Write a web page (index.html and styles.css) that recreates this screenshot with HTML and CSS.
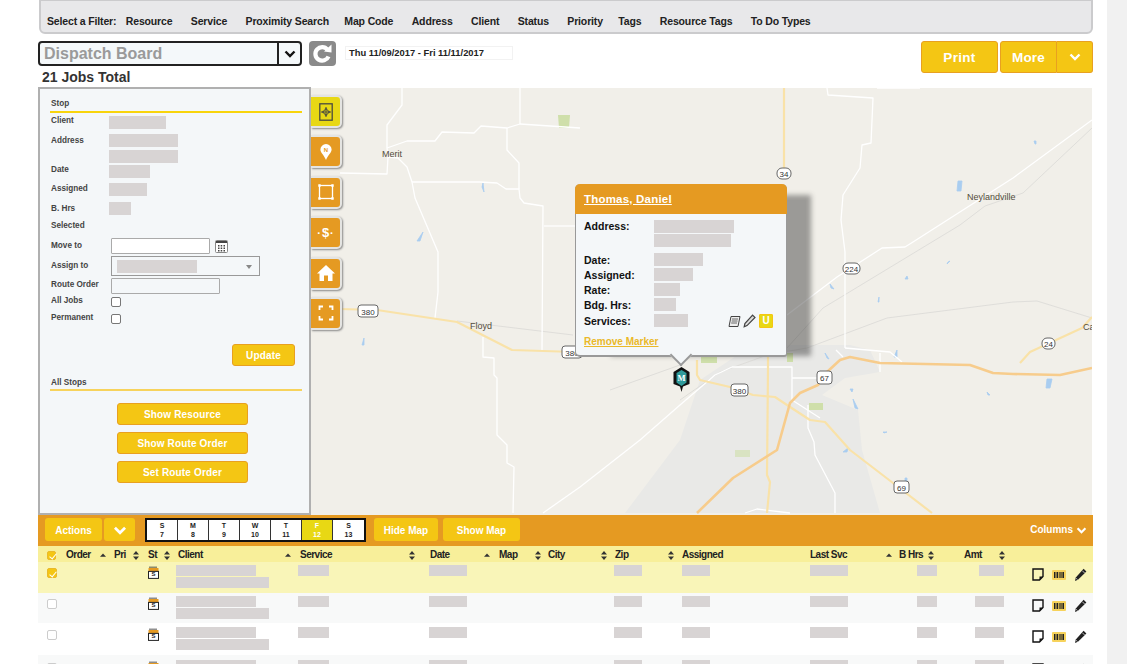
FILE: index.html
```html
<!DOCTYPE html>
<html lang="en">
<head>
<meta charset="utf-8">
<title>Dispatch Board</title>
<link rel="stylesheet" href="styles.css">
</head>
<body>
<svg class="defs" width="0" height="0" aria-hidden="true">
  <symbol id="sortb" viewBox="0 0 6 9"><path d="M3 0 6 3.4H0Z M3 9 0 5.6H6Z" fill="#333"/></symbol>
  <symbol id="sortu" viewBox="0 0 6 9"><path d="M3 2.5 6 5.8H0Z" fill="#333"/></symbol>
  <symbol id="note" viewBox="0 0 12 13"><path d="M1 1H11V8.5L7.5 12H1Z" fill="none" stroke="#111" stroke-width="1.4"/><path d="M11 8.5 7.5 12V8.5Z" fill="#111"/></symbol>
  <symbol id="barcode" viewBox="0 0 14 10"><rect width="14" height="10" rx="1" fill="#f7d35c"/><path d="M2 2H3.5V8H2ZM4.5 2H6V8H4.5ZM6.8 2H7.6V8H6.8ZM8.4 2H9.6V8H8.4ZM10.4 2H12V8H10.4Z" fill="#222"/></symbol>
  <symbol id="pencil" viewBox="0 0 13 14"><path d="M9.6.8 12.4 3.4 4 11.8 1 13 1.8 9.4Z" fill="#222"/><path d="M8.4 2.8 10.6 5" stroke="#fff" stroke-width=".7"/><path d="M1.8 10 3.6 11.6" stroke="#fff" stroke-width=".6"/></symbol>
  <symbol id="cal" viewBox="0 0 11 13"><path d="M2 .5V2M4 .5V2M6 .5V2M8 .5V2" stroke="#222" stroke-width="1"/><rect x=".5" y="2" width="10" height="3.4" fill="#e59a22"/><rect x=".5" y="5.4" width="10" height="7" fill="#fff" stroke="#222"/></symbol>
  <symbol id="chev" viewBox="0 0 12 8"><path d="M1.5 1.5 6 6 10.5 1.5" fill="none" stroke="currentColor" stroke-width="2.4"/></symbol>
</svg>
<div class="page">
  <main class="main">
    <nav class="filter">
      <span class="filter-title">Select a Filter:</span>
      <span>Resource</span><span>Service</span><span class="tight-s">Proximity Search</span><span>Map Code</span><span>Address</span><span>Client</span><span>Status</span><span class="tight-m">Priority</span><span>Tags</span><span>Resource Tags</span><span>To Do Types</span>
    </nav>

    <header class="head">
      <div class="head-left">
        <div class="head-controls">
          <div class="board-select">
            <span class="board-name">Dispatch Board</span>
            <span class="board-arrow"><svg class="chev-s"><use href="#chev"/></svg></span>
          </div>
          <button class="refresh" aria-label="Refresh">
            <svg viewBox="0 0 27 25" width="27" height="25"><path d="M18.5 8.6A6.800 6.800 0 1 0 19.500 15.500" fill="none" stroke="#fff" stroke-width="4.200"/><path d="M15 10.500 22.500 3.500V11.500Z" fill="#fff"/></svg>
          </button>
          <div class="date-range">Thu 11/09/2017 - Fri 11/11/2017</div>
        </div>
        <div class="jobs-total">21 Jobs Total</div>
      </div>
      <div class="head-right">
        <button class="btn btn-print">Print</button>
        <div class="more-group">
          <button class="btn btn-more">More</button>
          <button class="btn btn-more-arrow" aria-label="More options"><svg class="chev-m"><use href="#chev"/></svg></button>
        </div>
      </div>
    </header>

    <section class="map">
      <svg class="map-canvas" viewBox="38 88 1054 427" width="1054" height="427">
        <rect x="38" y="88" width="1054" height="427" fill="#f1efe9"/>
        <path class="city" d="M625 513 680 440 700 380 745 350 790 345 850 345 870 350 880 372 845 378 822 395 858 410 862 450 880 513Z"/>
        <g class="green">
          <path d="M558 115H570L569 128H559Z"/><path d="M787 353H793V362H787Z"/><path d="M809 403H823V410H809Z"/><path d="M735 450H750V457H735Z" opacity=".6"/>
          <path d="M701 357H717V363H701Z"/>
        </g>
        <g class="water">
          <path d="M483 183 484 192 482 187Z"/><path d="M423 232 420 241 417 241Z"/><path d="M364 338V345H362Z"/><path d="M958 181H962L961 191H957Z"/><path d="M1034 141H1036V144H1035Z"/><path d="M950 261 947 264 948 262Z"/><path d="M907 276 908 279H905Z"/><path d="M879 297V302H878Z"/><path d="M830 284 834 289 831 288Z"/><path d="M897 350V357H894Z"/><path d="M825 353 829 359 827 358Z"/><path d="M850 389H853L852 392Z"/><path d="M853 399 858 409 855 408Z"/><path d="M883 432H887L884 433Z"/><path d="M848 448 847 452 843 452Z"/><path d="M987 392 990 395 988 395Z"/><path d="M1047 379H1052L1050 388H1046Z"/><path d="M905 478H907V482H905Z"/>
        </g>
        <g class="road-gray">
          <path d="M1092 128 1023 193 985 206 960 225 823 308 787 348 720 372 680 400"/>
          <path d="M1092 318 1037 301 1013 302 887 318 807 348 760 356"/>
          <path d="M457 321 573 335"/>
          <path d="M610 390 680 365"/>
        </g>
        <g class="road-white">
          <path d="M402 88V105L387 125V148L388 157 387 174 340 173"/>
          <path d="M387 148 407 141H435L442 132 474 133 481 126 507 128 520 124 580 128"/>
          <path d="M388 157 398 158 407 167 412 182 415 198 438 252V292L435 318"/>
          <path d="M412 182H480L497 183 506 189H519L520 198 524 203 543 206 542 350"/>
          <path d="M507 128V150L519 163V189"/>
          <path d="M520 88V124"/>
          <path d="M544 226H575"/>
          <path d="M483 337V357L494 358V375L497 378V435L507 445V463L514 467 513 513"/>
          <path d="M827 88 828 95 873 98 871 143 862 145 860 168 843 195 841 220 845 252V348"/>
          <path d="M877 88H920"/>
          <path d="M1092 120 1013 178 913 242 905 247 882 248 837 277 787 315"/>
          <path d="M732 367H792V400L820 418M792 378H817M845 348 890 352 902 362M836 350 843 357M880 353V372"/>
          <path d="M808 405V428L814 442 815 455 835 493V513"/>
          <path d="M732 367 715 375 680 405 640 440 580 487 543 513"/>
          <path d="M745 513 757 509 790 513"/>
        </g>
        <g class="road-yellow">
          <path d="M340 309 377 310 457 322 512 350 575 352"/>
          <path d="M784 88V175"/>
          <path d="M697 360V375L700 380 730 387 753 395 775 397 787 405 810 420 825 422 850 450 893 483 932 513"/>
          <path d="M768 357V368L767 475 770 482 767 513"/>
          <path d="M1092 317 1082 328 1030 352 1020 363"/>
        </g>
        <path class="road-orange" d="M1092 368 1060 375 1013 374 993 373 970 365 880 363 850 357 840 360 827 372 818 385 800 393 790 403 777 450 733 478 697 513"/>
        <g class="shield">
          <rect x="358" y="305" width="20" height="12" rx="3"/><text x="368" y="314.5">380</text>
          <rect x="562" y="346" width="20" height="12" rx="3"/><text x="572" y="355.5">380</text>
          <rect x="777" y="168" width="14" height="11" rx="5"/><text x="784" y="176.5">34</text>
          <rect x="843" y="263" width="17" height="11" rx="5"/><text x="851.5" y="271.5">224</text>
          <rect x="1042" y="338" width="13" height="11" rx="5"/><text x="1048.5" y="346.5">24</text>
          <rect x="817" y="371" width="15" height="13" rx="3"/><text x="824.5" y="380.5">67</text>
          <rect x="731" y="384" width="17" height="12" rx="3"/><text x="739.5" y="393.5">380</text>
          <rect x="894" y="481" width="15" height="12" rx="3"/><text x="901.5" y="490.5">69</text>
        </g>
        <g class="place">
          <text x="382" y="157">Merit</text>
          <text x="470" y="329">Floyd</text>
          <text x="967" y="200">Neylandville</text>
          <text x="1083" y="330">Ca</text>
        </g>
      </svg>

      <ul class="tabs">
        <li class="tab tab-on"><svg viewBox="0 0 20 20" width="20" height="20"><rect x="3.800" y="1.800" width="12.400" height="16.400" fill="none" stroke="#4a4a40" stroke-width="1.300"/><circle cx="10" cy="10" r="2.500" fill="none" stroke="#4a4a40"/><path d="M10 5.500V14.500M5.500 10H14.500" stroke="#4a4a40" stroke-width=".9"/><path d="M10 5 11.300 6.800H8.700ZM10 15 11.300 13.200H8.700ZM5 10 6.800 8.700V11.300ZM15 10 13.200 8.700V11.300Z" fill="#4a4a40"/></svg></li>
        <li class="tab"><svg viewBox="0 0 20 20" width="20" height="20"><path d="M10 2A5.600 5.600 0 0 1 15.600 7.600C15.600 11 12 13 10 18 8 13 4.400 11 4.400 7.600A5.600 5.600 0 0 1 10 2Z" fill="#fff"/><text class="tab-n" x="10" y="10">N</text></svg></li>
        <li class="tab"><svg viewBox="0 0 20 20" width="20" height="20"><rect x="3.500" y="3.500" width="13" height="13" fill="none" stroke="#fff" stroke-width="1.300"/><path d="M2.300 2.300h2.400v2.400h-2.400zM15.300 2.300h2.400v2.400h-2.400zM2.300 15.300h2.400v2.400h-2.400zM15.300 15.300h2.400v2.400h-2.400z" fill="#fff"/></svg></li>
        <li class="tab"><span class="dollar">$</span></li>
        <li class="tab"><svg viewBox="0 0 20 20" width="20" height="20"><path d="M10 2 19 10.500H16.500V18H12V12.500H8V18H3.500V10.500H1Z" fill="#fff"/></svg></li>
        <li class="tab"><svg viewBox="0 0 20 20" width="20" height="20"><path d="M3.500 7V3.500H7M13 3.500H16.500V7M3.500 13V16.500H7M13 16.500H16.500V13" fill="none" stroke="#fff" stroke-width="1.800"/></svg></li>
      </ul>

      <aside class="panel">
        <h3 class="panel-head">Stop</h3>
        <div class="f-row r18"><span class="lbl">Client</span><span class="ph w57"></span></div>
        <div class="f-row r31"><span class="lbl lbl-12">Address</span><div class="stack"><span class="ph w69"></span><span class="ph w69"></span></div></div>
        <div class="f-row r18"><span class="lbl">Date</span><span class="ph w41"></span></div>
        <div class="f-row r19"><span class="lbl lbl-10">Assigned</span><span class="ph w38"></span></div>
        <div class="f-row r18"><span class="lbl lbl-12">B. Hrs</span><span class="ph w22"></span></div>
        <div class="f-row r18"><span class="lbl lbl-10">Selected</span></div>
        <div class="f-row r18"><span class="lbl lbl-14">Move to</span>
          <div class="ctl"><input class="inp inp-move" type="text" aria-label="Move to">
            <svg class="cal-btn" viewBox="0 0 13 13" width="13" height="13"><rect x=".5" y=".5" width="12" height="12" rx="1" fill="#fff" stroke="#888"/><rect x="1" y="1" width="11" height="2" fill="#444"/><path d="M3 5h1.500v1.500H3zM5.700 5h1.500v1.500H5.700zM8.500 5H10v1.500H8.500zM3 7.500h1.500V9H3zM5.700 7.500h1.500V9H5.700zM8.500 7.500H10V9H8.500zM3 10h1.500v1.500H3zM5.700 10h1.500v1.500H5.700zM8.500 10H10v1.500H8.500z" fill="#444"/></svg>
          </div>
        </div>
        <div class="f-row r22"><span class="lbl lbl-18">Assign to</span>
          <div class="ctl"><div class="sel"><span class="ph w80"></span><span class="caret"></span></div></div>
        </div>
        <div class="f-row r18"><span class="lbl lbl-12">Route Order</span><div class="ctl"><input class="inp inp-route" type="text" aria-label="Route Order"></div></div>
        <div class="f-row r17"><span class="lbl">All Jobs</span><div class="ctl"><span class="cb cb-panel"></span></div></div>
        <div class="f-row r17"><span class="lbl">Permanent</span><div class="ctl"><span class="cb cb-panel"></span></div></div>
        <div class="update-row"><button class="btn btn-panel btn-update">Update</button></div>
        <h3 class="panel-head panel-head2">All Stops</h3>
        <div class="panel-actions">
          <button class="btn btn-panel">Show Resource</button>
          <button class="btn btn-panel">Show Route Order</button>
          <button class="btn btn-panel">Set Route Order</button>
        </div>
      </aside>

      <article class="popup">
        <header class="popup-head"><a>Thomas, Daniel</a></header>
        <div class="popup-body">
          <div class="p-row p33"><b>Address:</b><div class="stack stack1"><span class="ph w80"></span><span class="ph w77"></span></div></div>
          <div class="p-row p15"><b>Date:</b><span class="ph w49"></span></div>
          <div class="p-row p15"><b>Assigned:</b><span class="ph w39"></span></div>
          <div class="p-row p15"><b>Rate:</b><span class="ph w26"></span></div>
          <div class="p-row p16"><b>Bdg. Hrs:</b><span class="ph w22"></span></div>
          <div class="p-row p15"><b>Services:</b><span class="ph w34"></span>
            <span class="p-icons">
              <svg viewBox="0 0 13 13" width="13" height="13"><path d="M3 1.500H12L10 11.500H1Z" fill="#eee" stroke="#444"/><path d="M4 4H10M3.700 6H9.500M3.200 8H9" stroke="#444" stroke-width=".8"/></svg>
              <svg viewBox="0 0 13 14" width="13" height="14"><path d="M9.600 1.200 12 3.400 4 11.600 1.200 12.800 1.900 9.600Z" fill="#ddd" stroke="#444" stroke-width="1.200"/></svg>
              <span class="u-badge">U</span>
            </span>
          </div>
          <a class="remove">Remove Marker</a>
        </div>
      </article>

      <svg class="pin" viewBox="0 0 17 25" width="17" height="25">
        <path d="M8.500 0 16.500 5V17L10 19.500 8.500 25 7 19.500.5 17V5Z" fill="#111"/>
        <path d="M8.500 3 13.500 6V15.500L8.500 19 3.500 15.500V6Z" fill="#2f9a9a"/>
        <text x="8.500" y="13.500">M</text>
      </svg>
    </section>

    <div class="table-bar">
      <button class="btn btn-bar btn-actions">Actions</button>
      <button class="btn btn-bar btn-bar-arrow" aria-label="Actions menu"><svg class="chev-b"><use href="#chev"/></svg></button>
      <div class="days">
        <div class="day"><b>S</b><b>7</b></div>
        <div class="day"><b>M</b><b>8</b></div>
        <div class="day"><b>T</b><b>9</b></div>
        <div class="day"><b>W</b><b>10</b></div>
        <div class="day"><b>T</b><b>11</b></div>
        <div class="day day-on"><b>F</b><b>12</b></div>
        <div class="day"><b>S</b><b>13</b></div>
      </div>
      <button class="btn btn-bar btn-hide">Hide Map</button>
      <button class="btn btn-bar btn-show">Show Map</button>
      <span class="columns">Columns <svg class="chev-c"><use href="#chev"/></svg></span>
    </div>

    <div class="grid-row grid-head">
      <div class="hc"><span class="cb cb-on cb-head"></span></div>
      <div class="hc pr8">Order<svg class="sort"><use href="#sortu"/></svg></div>
      <div class="hc pr9">Pri<svg class="sort"><use href="#sortb"/></svg></div>
      <div class="hc pr6">St<svg class="sort"><use href="#sortb"/></svg></div>
      <div class="hc pl2 pr7">Client<svg class="sort"><use href="#sortu"/></svg></div>
      <div class="hc pl2 pr14">Service<svg class="sort"><use href="#sortb"/></svg></div>
      <div class="hc pl1 pr9">Date<svg class="sort"><use href="#sortu"/></svg></div>
      <div class="hc pr7">Map<svg class="sort"><use href="#sortb"/></svg></div>
      <div class="hc pr7">City<svg class="sort"><use href="#sortb"/></svg></div>
      <div class="hc pl1 pr8">Zip<svg class="sort"><use href="#sortb"/></svg></div>
      <div class="hc">Assigned</div>
      <div class="hc pr7">Last Svc<svg class="sort"><use href="#sortu"/></svg></div>
      <div class="hc pr30">B Hrs<svg class="sort"><use href="#sortb"/></svg></div>
      <div class="hc pr27">Amt<svg class="sort"><use href="#sortb"/></svg></div>
      <div class="hc"></div>
    </div>

    <div class="grid-row data r-sel">
      <div><span class="cb cb-on"></span></div><div></div><div></div>
      <div><svg class="st"><use href="#cal"/></svg><span class="st-s">S</span></div>
      <div class="stack stack1"><span class="ph w80 ph11"></span><span class="ph w93 ph11"></span></div>
      <div><span class="ph w31 ph11"></span></div><div><span class="ph w38 ph11"></span></div><div></div><div></div>
      <div><span class="ph w28 ph11"></span></div><div><span class="ph w28 ph11"></span></div><div><span class="ph w38 ph11"></span></div>
      <div class="ml18"><span class="ph w20 ph11"></span></div><div class="ml15"><span class="ph w25 ph11"></span></div>
      <div class="row-icons"><svg class="i-note"><use href="#note"/></svg><svg class="i-bar"><use href="#barcode"/></svg><svg class="i-pen"><use href="#pencil"/></svg></div>
    </div>
    <div class="grid-row data r-alt">
      <div><span class="cb"></span></div><div></div><div></div>
      <div><svg class="st"><use href="#cal"/></svg><span class="st-s">S</span></div>
      <div class="stack stack1"><span class="ph w80 ph11"></span><span class="ph w93 ph11"></span></div>
      <div><span class="ph w31 ph11"></span></div><div><span class="ph w38 ph11"></span></div><div></div><div></div>
      <div><span class="ph w28 ph11"></span></div><div><span class="ph w28 ph11"></span></div><div><span class="ph w38 ph11"></span></div>
      <div class="ml18"><span class="ph w20 ph11"></span></div><div class="ml11"><span class="ph w29 ph11"></span></div>
      <div class="row-icons"><svg class="i-note"><use href="#note"/></svg><svg class="i-bar"><use href="#barcode"/></svg><svg class="i-pen"><use href="#pencil"/></svg></div>
    </div>
    <div class="grid-row data r-plain">
      <div><span class="cb"></span></div><div></div><div></div>
      <div><svg class="st"><use href="#cal"/></svg><span class="st-s">S</span></div>
      <div class="stack stack1"><span class="ph w80 ph11"></span><span class="ph w93 ph11"></span></div>
      <div><span class="ph w31 ph11"></span></div><div><span class="ph w38 ph11"></span></div><div></div><div></div>
      <div><span class="ph w28 ph11"></span></div><div><span class="ph w28 ph11"></span></div><div><span class="ph w38 ph11"></span></div>
      <div class="ml18"><span class="ph w20 ph11"></span></div><div class="ml11"><span class="ph w29 ph11"></span></div>
      <div class="row-icons"><svg class="i-note"><use href="#note"/></svg><svg class="i-bar"><use href="#barcode"/></svg><svg class="i-pen"><use href="#pencil"/></svg></div>
    </div>
    <div class="grid-row data r-alt r-last">
      <div><span class="cb"></span></div><div></div><div></div>
      <div><svg class="st"><use href="#cal"/></svg></div>
      <div class="stack stack1"><span class="ph w80 ph11"></span><span class="ph w93 ph11"></span></div>
      <div><span class="ph w31 ph11"></span></div><div><span class="ph w38 ph11"></span></div><div></div><div></div>
      <div><span class="ph w28 ph11"></span></div><div><span class="ph w28 ph11"></span></div><div><span class="ph w38 ph11"></span></div>
      <div class="ml18"><span class="ph w20 ph11"></span></div><div class="ml11"><span class="ph w29 ph11"></span></div>
      <div class="row-icons"><svg class="i-note"><use href="#note"/></svg><svg class="i-bar"><use href="#barcode"/></svg><svg class="i-pen"><use href="#pencil"/></svg></div>
    </div>
  </main>
  <div class="gutter"></div>
</div>
</body>
</html>
```
FILE: styles.css
```css
* { box-sizing: border-box; }
html, body { margin: 0; padding: 0; background: #fff; }
body { font-family: "Liberation Sans", Arial, sans-serif; overflow: hidden; }
.defs { position: absolute; }
.page { display: flex; width: 1127px; height: 664px; overflow: hidden; }
.main { width: 1055px; margin-left: 38px; flex: none; }
.gutter { width: 20px; margin-left: 14px; flex: none; background: #f1f1f1; }

/* filter bar */
.filter { height: 34px; margin-left: 1px; padding: 13px 0 0 6px; display: flex; gap: 18.4px; background: #e8e8ea; border: 2px solid #cbcbcd; border-top-width: 1px; border-radius: 0 0 6px 6px; font-size: 10.5px; font-weight: 700; line-height: 14px; color: #222; letter-spacing: -.15px; white-space: nowrap; }
.filter-title { margin-right: -9px; }
.tight-s { margin-right: -3px; }
.tight-m { margin-right: -3px; }

/* header */
.head { height: 47px; margin-top: 7px; display: flex; justify-content: space-between; }
.head-controls { display: flex; align-items: flex-start; }
.board-select { width: 264px; height: 25px; display: flex; background: #f4f8fa; border: 2px solid #222; border-radius: 4px; }
.board-name { flex: 1; padding-left: 4px; font-size: 16px; font-weight: 700; line-height: 22px; color: #9a9a9a; }
.board-arrow { width: 23px; display: flex; align-items: center; justify-content: center; border-left: 2px solid #222; color: #111; }
.chev-s { width: 12px; height: 8px; }
.refresh { width: 27px; height: 25px; margin-left: 7px; padding: 0; border: 0; border-radius: 4px; background: #8a8a8a; }
.date-range { width: 168px; height: 14px; margin: 5px 0 0 9px; padding-left: 3px; border: 1px solid #f2f2f2; background: #fff; font-size: 9.4px; font-weight: 700; line-height: 12px; color: #222; white-space: nowrap; }
.jobs-total { padding-left: 4px; font-size: 14px; font-weight: 700; line-height: 22px; color: #333; }
.head-right { display: flex; align-items: flex-start; gap: 2px; }
.btn { padding: 0; border: 1px solid #e8a020; border-radius: 3px; background: #f4c614; color: #fff; font-family: inherit; font-weight: 700; }
.btn-print { width: 77px; height: 32px; font-size: 13.5px; letter-spacing: .3px; }
.more-group { display: flex; height: 32px; }
.btn-more { width: 57px; height: 32px; border-radius: 3px 0 0 3px; font-size: 13.5px; letter-spacing: .2px; }
.btn-more-arrow { width: 36px; height: 32px; border-radius: 0 3px 3px 0; border-left: 0; display: flex; align-items: center; justify-content: center; }
.chev-m { width: 12px; height: 8px; color: #fff; }

/* map */
.map { position: relative; height: 427px; }
.map-canvas { display: block; }
.city { fill: #e9e9e7; }
.green path { fill: #cfdfaa; }
.water path { fill: #a9cdf0; stroke: #a9cdf0; stroke-width: .8; }
.road-white path, .road-gray path, .road-yellow path, .road-orange { fill: none; stroke-linejoin: round; }
.road-white path { stroke: #fff; stroke-width: 1.3; }
.road-gray path { stroke: #dddbd8; stroke-width: .9; }
.road-yellow path { stroke: #f9e2a8; stroke-width: 2.2; }
.road-orange { stroke: #f7cc8c; stroke-width: 2.6; }
.shield rect { fill: #fff; stroke: #666; stroke-width: 1; }
.shield text { font-size: 8px; text-anchor: middle; fill: #333; }
.place text { font-size: 9px; fill: #544d3c; }

.tabs { position: absolute; left: 273px; top: 7px; margin: 0; padding: 0; list-style: none; display: flex; flex-direction: column; gap: 7.4px; }
.tab { width: 31px; height: 33px; display: flex; align-items: center; justify-content: center; background: #e59a22; border: 2px solid #e4e4e2; border-left: 0; border-radius: 0 5px 5px 0; box-shadow: 1px 1px 2px #8a8a8a; }
.tab-on { background: #e8d814; }
.tab-n { font-size: 6px; font-weight: 700; text-anchor: middle; fill: #e59a22; }
.dollar { font-size: 13px; font-weight: 700; color: #fff; line-height: 16px; }
.dollar::before, .dollar::after { content: "\00b7"; font-size: 11px; margin: 0 1px; }

/* stop panel */
.panel { position: absolute; left: 0; top: -1px; width: 273px; height: 428px; padding: 0 7px 0 10px; background: #f4f7f9; border: 2px solid #b0b0b0; color: #444; }
.panel-head { margin: 0; padding: 9px 0 1px 1px; font-size: 8.2px; font-weight: 700; line-height: 12px; color: #444; border-bottom: 2px solid #f8d40c; }
.panel-head2 { padding-top: 11px; padding-bottom: 0; border-bottom-color: #f7d35c; }
.panel-head + .f-row { margin-top: 3px; }
.f-row { display: flex; align-items: flex-start; }
.r17 { height: 17px; } .r18 { height: 18px; } .r19 { height: 19px; } .r22 { height: 22px; } .r31 { height: 31px; }
.lbl { width: 59px; flex: none; padding: 1px 0 0 1px; font-size: 8.2px; font-weight: 700; line-height: 8px; white-space: nowrap; }
.lbl-10 { line-height: 10px; }
.lbl-12 { line-height: 12px; }
.lbl-14 { line-height: 14px; }
.lbl-18 { line-height: 18px; }
.ph { display: block; height: 13px; background: #d8d4d4; flex: none; }
.ph11 { height: 11px; }
.w20 { width: 20px; } .w22 { width: 22px; } .w25 { width: 25px; } .w26 { width: 26px; } .w28 { width: 28px; } .w29 { width: 29px; } .w31 { width: 31px; } .w34 { width: 34px; } .w38 { width: 38px; } .w39 { width: 39px; } .w41 { width: 41px; } .w49 { width: 49px; } .w57 { width: 57px; } .w69 { width: 69px; } .w77 { width: 77px; } .w80 { width: 80px; } .w93 { width: 93px; }
.stack { display: flex; flex-direction: column; gap: 3px; }
.stack1 { gap: 1px; }
.ctl { display: flex; align-items: flex-start; margin-left: 2px; }
.inp { display: block; padding: 0; border: 1px solid #aaa; border-radius: 1px; }
.inp-move { width: 99px; height: 16px; background: #fff; }
.inp-route { width: 109px; height: 16px; background: #f4f7f9; }
.cal-btn { margin: 2px 0 0 5px; }
.sel { width: 149px; height: 20px; padding: 3px 0 0 5px; position: relative; border: 1px solid #999; }
.caret { position: absolute; right: 7px; top: 8px; border: 3px solid transparent; border-top: 4px solid #888; border-bottom: 0; }
.cb { display: block; width: 10px; height: 10px; background: #fff; border: 1px solid #ccc; border-radius: 2px; }
.cb-panel { border-color: #777; margin-top: 1px; }
.cb-on { position: relative; background: #f4c614; border-color: #eab92a; }
.cb-on::after { content: ""; position: absolute; left: 2.500px; top: .5px; width: 3px; height: 6px; border: solid #fff; border-width: 0 1.300px 1.300px 0; transform: rotate(40deg); }
.update-row { display: flex; justify-content: flex-end; margin: 14px 7px 0 0; }
.btn-panel { width: 131px; height: 22px; font-size: 10px; letter-spacing: .15px; }
.btn-update { width: 63px; }
.panel-actions { display: flex; flex-direction: column; gap: 7px; margin: 12px 0 0 67px; }

/* popup */
.popup { position: absolute; left: 537px; top: 96px; width: 212px; height: 173px; background: #f4f7f9; border: 1px solid #999; border-top: 0; border-bottom-width: 2px; border-radius: 5px 5px 3px 5px; box-shadow: 30px 5px 5px -6px rgba(50, 50, 50, .45); }
.popup::after { content: ""; position: absolute; left: 97px; bottom: -8px; width: 14px; height: 14px; background: #f4f7f9; border: solid #999; border-width: 0 2px 2px 0; transform: rotate(45deg); }
.popup-head { height: 30px; margin: 0 -1px; padding: 0 0 1px 9px; display: flex; align-items: center; background: #e59a22; border-radius: 5px 5px 0 0; }
.popup-head a { font-size: 11.500px; font-weight: 700; color: #fff; text-decoration: underline; letter-spacing: .2px; }
.popup-body { position: relative; z-index: 1; padding: 6px 13px 0 8px; }
.p-row { display: flex; align-items: flex-start; font-size: 10.500px; line-height: 13px; color: #111; }
.p-row b { width: 70px; flex: none; }
.p15 b, .p16 b { padding-top: 1px; }
.p15 { height: 15px; } .p16 { height: 16px; } .p33 { height: 33px; }
.p-icons { margin-left: auto; display: flex; align-items: center; gap: 2px; }
.u-badge { width: 14px; height: 14px; margin-left: 1px; background: #e8d814; border: 1px solid #f4c614; border-radius: 1px; color: #fff; font-size: 10px; font-weight: 700; line-height: 12px; text-align: center; }
.remove { display: block; margin-top: 7px; font-size: 10px; font-weight: 700; line-height: 12px; color: #eab92a; text-decoration: underline; }
.pin { position: absolute; left: 635px; top: 279px; }
.pin text { font-size: 8.500px; font-weight: 700; text-anchor: middle; fill: #fff; font-family: "Liberation Serif", serif; }

/* table toolbar */
.table-bar { height: 31px; padding: 3px 6px 0 7px; display: flex; align-items: flex-start; background: #e59a22; }
.btn-bar { height: 23px; padding-top: 1px; border: 0; font-size: 10px; }
.btn-actions { width: 57px; }
.btn-bar-arrow { width: 31px; margin-left: 2px; display: flex; align-items: center; justify-content: center; }
.chev-b { width: 14px; height: 9px; color: #fff; }
.days { width: 221px; height: 24px; margin: 0 8px 0 10px; display: grid; grid-template-columns: repeat(7, 1fr); border: 2px solid #111; background: #fff; }
.day { display: flex; flex-direction: column; align-items: center; justify-content: center; border-right: 1px solid #333; font-size: 7px; line-height: 9px; color: #222; }
.day:last-child { border-right: 0; }
.day-on { background: #e8d814; color: #fff; }
.btn-hide { width: 64px; }
.btn-show { width: 77px; margin-left: 5px; }
.columns { margin: 5px 0 0 auto; display: flex; align-items: center; gap: 3px; font-size: 10px; font-weight: 700; line-height: 14px; color: #fff; }
.chev-c { width: 11px; height: 7px; color: #fff; }

/* data grid */
.grid-row { display: grid; grid-template-columns: 28px 48px 34px 28px 122px 131px 70px 49px 66px 68px 128px 89px 65px 68px 63px; }
.grid-head { height: 16px; background: #f8ef9a; font-size: 10px; font-weight: 700; line-height: 16px; color: #222; letter-spacing: -.5px; }
.hc { display: flex; align-items: center; padding-top: 1px; white-space: nowrap; }
.hc:first-child { padding-left: 9px; }
.sort { width: 6px; height: 9px; margin-left: auto; flex: none; }
.pl1 { padding-left: 1px; }
.pl2 { padding-left: 2px; }
.pr6 { padding-right: 6px; } .pr7 { padding-right: 7px; } .pr8 { padding-right: 8px; } .pr9 { padding-right: 9px; } .pr14 { padding-right: 14px; } .pr27 { padding-right: 27px; } .pr30 { padding-right: 30px; }
.cb-head { width: 9px; height: 9px; }
.data { padding-top: 3px; position: relative; }
.data > div:first-child { padding: 3px 0 0 9px; }
.r-sel { height: 31px; background: #f9f5b8; }
.r-alt { height: 30px; background: #f8f9f9; }
.r-plain { height: 32px; padding-top: 4px; background: #fff; }
.r-last { height: 12px; padding-top: 5px; overflow: hidden; }
.st { display: block; width: 11px; height: 13px; }
.data > div:nth-child(4) { position: relative; padding-top: 1px; }
.st-s { position: absolute; left: 0; top: 6px; width: 11px; text-align: center; font-size: 6px; font-weight: 700; line-height: 7px; color: #222; }
.ml18 { padding-left: 18px; } .ml15 { padding-left: 15px; } .ml11 { padding-left: 11px; }
.row-icons { display: flex; align-items: flex-start; padding-top: 3px; }
.i-note { width: 12px; height: 13px; }
.i-bar { width: 14px; height: 10px; margin: 2px 0 0 8px; }
.i-pen { width: 13px; height: 14px; margin-left: 8px; }
```
